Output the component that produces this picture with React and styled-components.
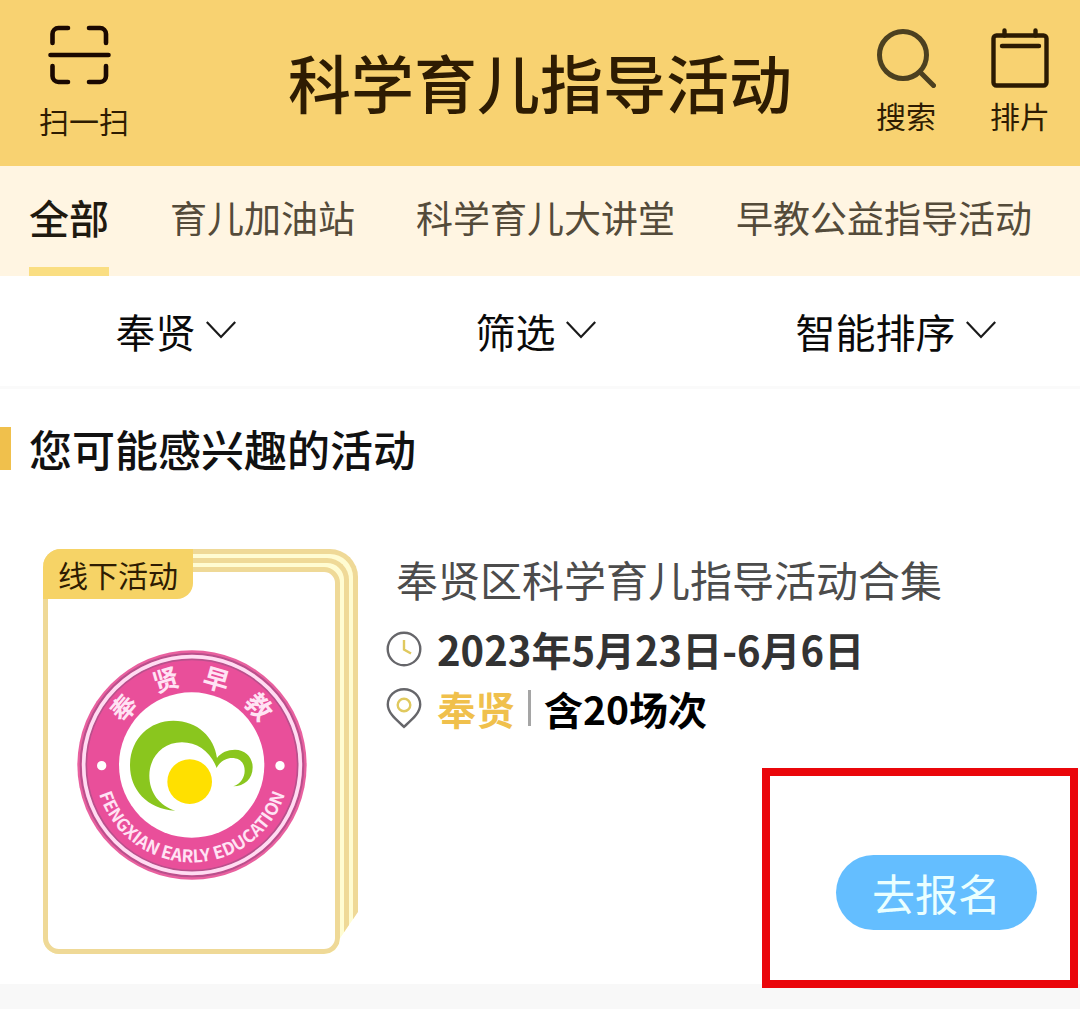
// 科学育儿指导活动 列表页
import React, { useState } from "react";
import styled, { createGlobalStyle, ThemeProvider } from "styled-components";

const theme = {
  yellow: "#f8d271",
  badge: "#f6d366",
  cream: "#fff5e2",
  underline: "#fade82",
  accent: "#f0c04c",
  frame: "#efd997",
  frameGap: "#fffcd2",
  line: "#f8f8f8",
  brown: "#2e1c02",
  gray: "#4c4c4c",
  blue: "#64beff",
  red: "#ea060b"
};

const GlobalStyle = createGlobalStyle`
  * {
    box-sizing: border-box;
  }
  body {
    margin: 0;
    font-family: "Noto Sans CJK SC", sans-serif;
  }
  h1, h2, h3, p {
    margin: 0;
  }
  button, select {
    margin: 0;
    padding: 0;
    border: 0;
    background: none;
    color: inherit;
    font-family: inherit;
    cursor: pointer;
  }
  svg {
    display: block;
    flex: none;
  }
`;

const Page = styled.div`
  min-height: 100vh;
  background: ${props => props.theme.line};
`;

const Header = styled.header`
  display: grid;
  grid-template-columns: 1fr auto 1fr;
  height: 166px;
  padding: 0 30px;
  background: ${props => props.theme.yellow};
`;

const Title = styled.h1`
  align-self: center;
  padding-bottom: 4px;
  font-size: 63px;
  font-weight: 500;
  line-height: 80px;
  color: ${props => props.theme.brown};
`;

const Side = styled.div`
  display: flex;
  align-items: flex-start;
  justify-content: ${props => (props.$end ? "flex-end" : "flex-start")};
  gap: 54px;
  padding: ${props => (props.$end ? "28px 0 0" : "25px 0 0 9px")};
`;

const IconButton = styled.button`
  display: flex;
  flex-direction: column;
  align-items: center;
  gap: ${props => props.$gap}px;
  font-size: 30px;
  line-height: 36px;
  color: ${props => props.theme.brown};
`;

const Tabs = styled.nav`
  display: flex;
  gap: 61px;
  padding-left: 29px;
  background: ${props => props.theme.cream};
  overflow: hidden;
`;

const Tab = styled.button`
  flex: none;
  height: 110px;
  border-bottom: 9px solid
    ${props => (props.$active ? props.theme.underline : "transparent")};
  font-size: ${props => (props.$active ? 40 : 37)}px;
  font-weight: ${props => (props.$active ? 500 : 400)};
  color: ${props => (props.$active ? "#1f1a10" : "#544b3a")};
`;

const Filters = styled.div`
  display: flex;
  height: 113px;
  border-bottom: 3px solid #fafafa;
  background: #fff;
`;

const Filter = styled.label`
  flex: 1;
  display: flex;
  align-items: center;
  justify-content: center;
  gap: 10px;
  padding-right: 9px;
`;

const Select = styled.select`
  appearance: none;
  font-size: 40px;
  line-height: 56px;
  color: #0a0a0a;
`;

const Section = styled.section`
  padding: 38px 0 30px;
  background: #fff;
`;

const Heading = styled.h2`
  border-left: 11px solid ${props => props.theme.accent};
  padding-left: 18px;
  font-size: 43px;
  font-weight: 500;
  line-height: 43px;
  color: #111;
`;

const Card = styled.article`
  display: flex;
  gap: 28px;
  margin-top: 79px;
  padding: 0 43px;
`;

const Cover = styled.div`
  position: relative;
  flex: none;
  width: 315px;
`;

const Badge = styled.span`
  position: absolute;
  top: 0;
  left: 0;
  border-radius: 18px 0 16px 0;
  padding: 0 15px;
  background: ${props => props.theme.badge};
  font-size: 30px;
  line-height: 50px;
  color: ${props => props.theme.brown};
`;

const Sheet = styled.div`
  border: 5px solid ${props => props.theme.frame};
  border-width: 5px 5px 0 0;
  border-radius: 18px ${props => props.$radius}px 0 16px;
  padding: 4px 4px 0 0;
  background: ${props => props.theme.frameGap};
`;

// 最外层右下角是斜切的
const Stack = styled(Sheet)`
  clip-path: polygon(
    0 0,
    100% 0,
    100% calc(100% - 42px),
    calc(100% - 18px) calc(100% - 16px),
    calc(100% - 19px) calc(100% - 10px),
    calc(100% - 23px) calc(100% - 4px),
    calc(100% - 28px) calc(100% - 1px),
    calc(100% - 34px) 100%,
    0 100%
  );
`;

const Front = styled.div`
  display: flex;
  align-items: center;
  justify-content: center;
  height: 387px;
  border: 5px solid ${props => props.theme.frame};
  border-radius: 16px;
  padding-top: 8px;
  background: #fff;
`;

const Info = styled.div`
  flex: 1;
  display: flex;
  flex-direction: column;
`;

const Name = styled.h3`
  padding-left: 10px;
  font-size: 42px;
  font-weight: 400;
  line-height: 60px;
  color: ${props => props.theme.gray};
`;

const Row = styled.p`
  display: flex;
  align-items: center;
  gap: 15px;
  height: 59px;
  font-size: ${props => props.$size}px;
  font-weight: 700;
  line-height: 56px;
  color: #333;
`;

const Details = styled.div`
  padding-top: 10px;
`;

const Place = styled.span`
  display: flex;
  align-items: center;
  gap: 13px;
  color: #000;
`;

const District = styled.span`
  color: ${props => props.theme.accent};
`;

const Divider = styled.span`
  width: 3px;
  height: 36px;
  background: #a5a5a5;
`;

const Action = styled.div`
  position: relative;
  align-self: flex-end;
  margin-top: auto;
  margin-bottom: 24px;
`;

const Highlight = styled.div`
  position: absolute;
  inset: -87px -41px -58px -74px;
  border: 8px solid ${props => props.theme.red};
  pointer-events: none;
`;

const Apply = styled.button`
  display: block;
  border-radius: 38px;
  padding: 0 36px 1px;
  background: ${props => props.theme.blue};
  font-size: 43px;
  line-height: 74px;
  color: #eaffff;
`;

const LogoText = styled.text`
  font-family: "Noto Sans CJK SC", sans-serif;
  font-size: ${props => props.$size}px;
  font-weight: 700;
  fill: #ffe3f4;
`;

const ScanIcon = () => (
  <svg width="74" height="60" viewBox="0 0 74 60" fill="none" stroke="#1a0801" strokeWidth="4.6" strokeLinecap="round">
    <path d="M5.5 18V9a6 6 0 0 1 6-6h9.500M42 3h11a6 6 0 0 1 6 6v9M5.500 41v10a6 6 0 0 0 6 6h9.500M42 57h11a6 6 0 0 0 6-6V41M3.500 30h58" />
  </svg>
);

const SearchIcon = () => (
  <svg width="60" height="60" viewBox="0 0 60 60" fill="none" stroke="#4c4020" strokeWidth="5" strokeLinecap="round">
    <circle cx="27" cy="27" r="23.500" />
    <path d="M45 45l12.500 12.500" />
  </svg>
);

const CalendarIcon = () => (
  <svg width="60" height="60" viewBox="0 0 60 60" fill="none" stroke="#2b1a02" strokeWidth="4.400" strokeLinecap="round">
    <rect x="3.500" y="7.500" width="53" height="50" rx="3" />
    <path d="M14.500 2.500v5M45.500 2.500v5M12 18h37" />
  </svg>
);

const ArrowIcon = () => (
  <svg width="30" height="40" viewBox="0 0 30 40" fill="none" stroke="#1a1a1a" strokeWidth="2.200">
    <path d="M.8 11l14.200 15L29.200 11" />
  </svg>
);

const ClockIcon = () => (
  <svg width="36" height="36" viewBox="0 0 36 36" fill="none" strokeWidth="2.400">
    <circle cx="18" cy="18" r="16.300" stroke="#66666a" />
    <path d="M18 9v9.500l7 4" stroke="#e0c95e" />
  </svg>
);

const PinIcon = () => (
  <svg width="36" height="42" viewBox="0 0 36 42" fill="none" strokeWidth="2.400">
    <path d="M18 2.200C9 2.200 1.800 9 1.800 17.500c0 8.500 8.200 15 16.200 22.300 8-7.300 16.200-13.800 16.200-22.300C34.200 9 27 2.200 18 2.200z" stroke="#66666a" />
    <circle cx="18" cy="18" r="6.300" stroke="#e0c95e" />
  </svg>
);

const ringText = [
  { char: "奉", angle: -50 },
  { char: "贤", angle: -17 },
  { char: "早", angle: 16 },
  { char: "教", angle: 49 }
];

const Logo = () => (
  <svg width="232" height="232" viewBox="50 55 696 696">
    <circle cx="398" cy="403" r="344" fill="#e9609f" />
    <circle cx="398" cy="403" r="334" fill="none" stroke="#b9508c" strokeWidth="6" />
    <circle cx="398" cy="403" r="324" fill="none" stroke="#ffdcf2" strokeWidth="13" />
    <circle cx="398" cy="403" r="317" fill="#e94f9a" stroke="#b9508c" strokeWidth="5" />
    <circle cx="397" cy="403" r="218" fill="#fff" />
    {ringText.map(({ char, angle }) => (
      <LogoText
        key={char}
        $size={78}
        x="398"
        y="165"
        textAnchor="middle"
        transform={`rotate(${angle} 398 403)`}
      >
        {char}
      </LogoText>
    ))}
    <circle cx="127" cy="405" r="14" fill="#fff" />
    <circle cx="662" cy="405" r="14" fill="#fff" />
    <path id="ring" d="M106 403A292 292 0 0 0 690 403" fill="none" />
    <LogoText $size={52} textAnchor="middle">
      <textPath href="#ring" startOffset="50%">
        FENGXIAN EARLY EDUCATION
      </textPath>
    </LogoText>
    <path
      fill="#8ac61e"
      d="M348 540C262 535 212 475 212 405c0-80 58-135 130-135 73 0 123 50 131 112 12-17 32-25 54-25 33 0 53 25 53 53 0 35-25 57-58 57 23-9 34-27 34-47 0-25-16-38-38-38-20 0-38 13-46 30-17-47-57-77-104-77-58 0-98 45-98 100 0 50 30 90 78 105z"
    />
    <circle cx="391" cy="453" r="67" fill="#ffe000" />
  </svg>
);

const tabs = ["全部", "育儿加油站", "科学育儿大讲堂", "早教公益指导活动"];
const filters = ["奉贤", "筛选", "智能排序"];

export default () => {
  const [current, setCurrent] = useState(tabs[0]);
  return (
    <ThemeProvider theme={theme}>
      <GlobalStyle />
      <Page>
        <Header>
          <Side>
            <IconButton $gap={17}>
              <ScanIcon />
              扫一扫
            </IconButton>
          </Side>
          <Title>科学育儿指导活动</Title>
          <Side $end>
            <IconButton $gap={9}>
              <SearchIcon />
              搜索
            </IconButton>
            <IconButton $gap={9}>
              <CalendarIcon />
              排片
            </IconButton>
          </Side>
        </Header>
        <Tabs>
          {tabs.map(tab => (
            <Tab key={tab} $active={tab === current} onClick={() => setCurrent(tab)}>
              {tab}
            </Tab>
          ))}
        </Tabs>
        <Filters>
          {filters.map(filter => (
            <Filter key={filter}>
              <Select>
                <option>{filter}</option>
              </Select>
              <ArrowIcon />
            </Filter>
          ))}
        </Filters>
        <Section>
          <Heading>您可能感兴趣的活动</Heading>
          <Card>
            <Cover>
              <Stack $radius={28}>
                <Sheet $radius={22}>
                  <Front>
                    <Logo />
                  </Front>
                </Sheet>
              </Stack>
              <Badge>线下活动</Badge>
            </Cover>
            <Info>
              <Name>奉贤区科学育儿指导活动合集</Name>
              <Details>
                <Row $size={40}>
                  <ClockIcon />
                  2023年5月23日-6月6日
                </Row>
                <Row $size={39}>
                  <PinIcon />
                  <Place>
                    <District>奉贤</District>
                    <Divider />
                    含20场次
                  </Place>
                </Row>
              </Details>
              <Action>
                <Apply>去报名</Apply>
                <Highlight />
              </Action>
            </Info>
          </Card>
        </Section>
      </Page>
    </ThemeProvider>
  );
};
